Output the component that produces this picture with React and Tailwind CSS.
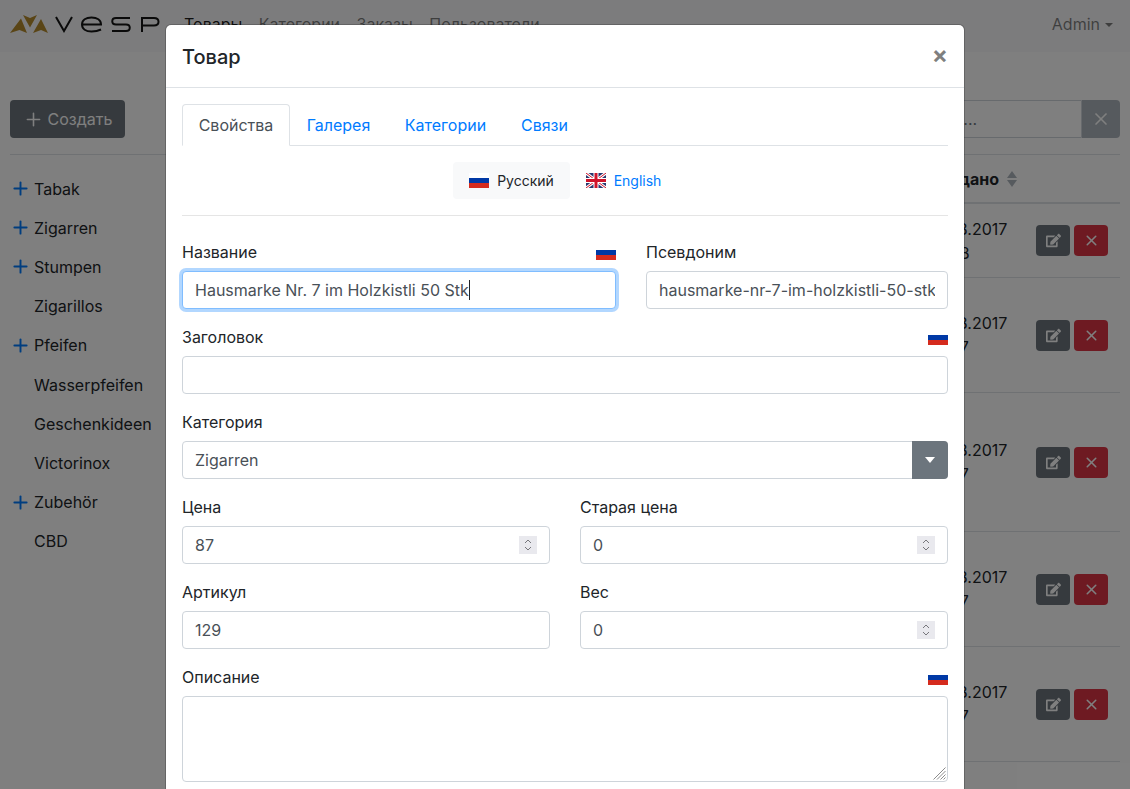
import React from "react";
import { Plus, X } from "lucide-react";
import { FaEdit } from "react-icons/fa";

const FONT = { fontFamily: "Inter, 'Noto Sans', sans-serif" };

function RuFlag({ className = "" }) {
  return (
    <svg viewBox="0 0 20 15" className={className} preserveAspectRatio="none">
      <rect width="20" height="5" fill="#ffffff" />
      <rect y="5" width="20" height="5" fill="#0039a6" />
      <rect y="10" width="20" height="5" fill="#d52b1e" />
    </svg>
  );
}

function UkFlag({ className = "" }) {
  return (
    <svg viewBox="0 0 60 45" className={className} preserveAspectRatio="none">
      <rect width="60" height="45" fill="#29376f" />
      <path d="M0 0 60 45M60 0 0 45" stroke="#fff" strokeWidth="9" />
      <path d="M0 0 60 45M60 0 0 45" stroke="#cf142b" strokeWidth="3" />
      <path d="M30 0V45M0 22.5H60" stroke="#fff" strokeWidth="15" />
      <path d="M30 0V45M0 22.5H60" stroke="#cf142b" strokeWidth="9" />
    </svg>
  );
}

function Logo() {
  return (
    <div className="flex items-center">
      <svg width="38" height="20" viewBox="0 0 38 20" className="block">
        <path d="M0 19 11 4.5 17 19 9.5 16Z" fill="#b58a2c" />
        <path d="M13 1 20 4 27 1 20 13.5Z" fill="#b58a2c" />
        <path d="M23 19 31 5 38 19 31 16Z" fill="#b58a2c" />
      </svg>
      <svg width="105" height="20" viewBox="0 0 105 20" className="block ml-[7px]">
        <g fill="none" stroke="#141414" strokeWidth="2">
          <path d="M1 3 9 17 17 3" />
          <path d="M27 10.5H46C46 6 42 3.5 36.5 3.5S27 6 27 10.5 31 17.5 36.5 17.5C40 17.5 43 17 46 15.5" />
          <path d="M75 4H61C56 4 56 10.5 61 10.5H71C76 10.5 76 17 71 17H57" />
          <path d="M87 18V4H99C105 4 105 11.5 99 11.5H87" />
        </g>
      </svg>
    </div>
  );
}

const categories = [
  ["Tabak", true],
  ["Zigarren", true],
  ["Stumpen", true],
  ["Zigarillos", false],
  ["Pfeifen", true],
  ["Wasserpfeifen", false],
  ["Geschenkideen", false],
  ["Victorinox", false],
  ["Zubehör", true],
  ["CBD", false],
];

const rows = [
  { h: 74, t: "12:38" },
  { h: 115, t: "12:37" },
  { h: 139, t: "12:37" },
  { h: 115, t: "12:37" },
  { h: 115, t: "12:37" },
];

const tabs = [
  ["Галерея", "w-[97px]"],
  ["Категории", "w-[117px]"],
  ["Связи", "w-[81px]"],
];

function Background() {
  return (
    <div className="h-[789px] overflow-hidden bg-white">
      <header className="h-[52px] bg-[#f8f9fa] flex items-center pl-[10px] pr-[17px] pb-[5px]">
        <Logo />
        <nav className="flex ml-[24px] gap-[16.5px] text-[#000000e6]">
          <span>Товары</span>
          <span className="text-black/50">Категории</span>
          <span className="text-black/50">Заказы</span>
          <span className="text-black/50">Пользователи</span>
        </nav>
        <div className="ml-auto flex items-center text-black/50">
          Admin
          <span className="ml-[5px] mt-[2px] border-x-[4px] border-t-[4px] border-x-transparent border-t-black/50" />
        </div>
      </header>
      <div className="flex px-[10px] pt-[48px]">
        <aside className="w-[156px] shrink-0">
          <button className="h-[38px] w-[115px] rounded bg-[#6c757d] text-white flex items-center justify-center gap-[4px]">
            <Plus size={21} strokeWidth={1.8} />
            Создать
          </button>
        </aside>
        <div className="flex-1 flex justify-end">
          <div className="flex h-[38px] w-[223px]">
            <input
              className="flex-1 min-w-0 px-[12px] border border-[#ced4da] rounded-l bg-white outline-none placeholder:text-[#6c757d]"
              placeholder="Поиск...."
              readOnly
            />
            <div className="w-[38px] shrink-0 bg-[#adb5bd] rounded-r flex items-center justify-center text-white">
              <X size={20} strokeWidth={2} />
            </div>
          </div>
        </div>
      </div>
      <div className="flex px-[10px] mt-[16px]">
        <aside className="w-[156px] shrink-0 border-t border-[#dee2e6] pt-[14px]">
          {categories.map(([name, plus]) => (
            <div key={name} className="h-[39.2px] flex items-center text-[#212529]">
              <span className="w-[24px] shrink-0 text-[#007bff]">
                {plus && <Plus size={21} strokeWidth={2.2} />}
              </span>
              <span className="whitespace-nowrap">{name}</span>
            </div>
          ))}
        </aside>
        <div className="flex-1 border-t border-[#dee2e6]">
          <div className="h-[49px] flex items-center justify-end border-b-2 border-[#dee2e6] pr-[102px] font-bold text-[#212529]">
            дано
            <svg width="12" height="16" viewBox="0 0 12 16" className="ml-[7px]">
              <path d="M6 0 11 7H1Z" fill="#adb5bd" />
              <path d="M6 16 11 9H1Z" fill="#adb5bd" />
            </svg>
          </div>
          {rows.map((r, i) => (
            <div
              key={i}
              className="flex justify-end items-center border-b border-[#dee2e6] pr-[12px]"
              style={{ height: r.h }}
            >
              <div className="text-[#212529] leading-[24px] w-[86px] mr-[26px] whitespace-nowrap">
                <div>20.08.2017</div>
                <div className="pl-[5px]">{r.t}</div>
              </div>
              <div className="flex gap-[4px]">
                <div className="w-[34px] h-[31px] rounded bg-[#6c757d] flex items-center justify-center text-white">
                  <FaEdit size={15} />
                </div>
                <div className="w-[34px] h-[31px] rounded bg-[#dc3545] flex items-center justify-center text-white">
                  <X size={17} strokeWidth={2.2} />
                </div>
              </div>
            </div>
          ))}
        </div>
      </div>
    </div>
  );
}

const inputCls =
  "block w-full h-[38px] px-[12px] bg-white border border-[#ced4da] rounded text-[#495057] outline-none";

function Label({ children, flag }) {
  return (
    <div className="flex items-center justify-between h-[24px] mb-[7px] text-[#212529]">
      <span>{children}</span>
      {flag && <RuFlag className="w-[20px] h-[15px]" />}
    </div>
  );
}

function Spinner() {
  return (
    <div className="absolute right-[13px] top-[10px] w-[18px] h-[18px] bg-[#e9e9ee] flex items-center justify-center">
      <svg width="10" height="14" viewBox="0 0 10 14" fill="none" stroke="#77777c" strokeWidth="1">
        <path d="M2 5 5 2 8 5" />
        <path d="M2 9 5 12 8 9" />
      </svg>
    </div>
  );
}

function NumberField({ label, value, spin = true }) {
  return (
    <div className="flex-1 min-w-0">
      <Label>{label}</Label>
      <div className="relative">
        <input className={inputCls} defaultValue={value} readOnly />
        {spin && <Spinner />}
      </div>
    </div>
  );
}

function Modal() {
  return (
    <div className="absolute left-[165px] top-[24px] w-[800px] h-[900px] bg-white border border-black/20 rounded-[6px] bg-clip-padding">
      <div className="h-[63px] border-b border-[#dee2e6] flex items-center justify-between px-[16px]">
        <h5 className="text-[20px] font-medium text-[#212529] mt-px">Товар</h5>
        <span className="text-[24px] leading-none font-bold text-black/50 -mt-[3px]">×</span>
      </div>
      <div className="px-[16px] pt-[16px]">
        <div className="flex h-[42px] border-b border-[#dee2e6]">
          <div className="h-[42px] w-[108px] flex items-center justify-center border border-[#dee2e6] border-b-white rounded-t text-[#495057] bg-white">
            Свойства
          </div>
          {tabs.map(([t, w]) => (
            <div key={t} className={`h-[41px] flex items-center justify-center text-[#007bff] ${w}`}>
              {t}
            </div>
          ))}
        </div>
        <div className="flex justify-center pt-[16px] pb-[16px] border-b border-[#e5e5e5] text-[14px]">
          <div className="h-[37px] w-[117px] rounded bg-[#f8f9fa] flex items-center justify-center gap-[8px] text-[#212529]">
            <RuFlag className="w-[20px] h-[15px]" />
            Русский
          </div>
          <div className="h-[37px] w-[107px] flex items-center justify-center gap-[8px] text-[#007bff]">
            <UkFlag className="w-[20px] h-[15px]" />
            English
          </div>
        </div>
        <div className="pt-[24px]">
          <div className="flex gap-[30px] mb-[16px]">
            <div className="w-[434px] shrink-0">
              <Label flag>Название</Label>
              <div className="relative">
                <input
                  className={`${inputCls} !border-[#80bdff] shadow-[0_0_0_3px_rgba(0,123,255,0.3)]`}
                  defaultValue="Hausmarke Nr. 7 im Holzkistli 50 Stk"
                  readOnly
                />
                <span className="absolute left-[287px] top-[9px] w-px h-[20px] bg-[#212529]" />
              </div>
            </div>
            <div className="flex-1 min-w-0">
              <Label>Псевдоним</Label>
              <input className={inputCls} defaultValue="hausmarke-nr-7-im-holzkistli-50-stk" readOnly />
            </div>
          </div>
          <div className="mb-[16px]">
            <Label flag>Заголовок</Label>
            <input className={inputCls} defaultValue="" readOnly />
          </div>
          <div className="mb-[16px]">
            <Label>Категория</Label>
            <div className={`${inputCls} flex items-center justify-between pr-0 relative`}>
              Zigarren
              <div className="absolute right-[-1px] top-[-1px] w-[36px] h-[38px] bg-[#6c757d] rounded-r flex items-center justify-center">
                <span className="border-x-[5px] border-t-[6px] border-x-transparent border-t-white" />
              </div>
            </div>
          </div>
          <div className="flex gap-[30px] mb-[16px]">
            <NumberField label="Цена" value="87" />
            <NumberField label="Старая цена" value="0" />
          </div>
          <div className="flex gap-[30px] mb-[16px]">
            <NumberField label="Артикул" value="129" spin={false} />
            <NumberField label="Вес" value="0" />
          </div>
          <div>
            <Label flag>Описание</Label>
            <div className="relative">
              <textarea
                className="block w-full h-[86px] px-[12px] py-[6px] bg-white border border-[#ced4da] rounded outline-none resize-none"
                readOnly
              />
              <svg width="13" height="13" viewBox="0 0 13 13" className="absolute right-[2px] bottom-[2px]" stroke="#6f6f6f" strokeWidth="0.8">
                <path d="M0.5 12.5 12.5 0.5M4 12.5 12.5 4M7.5 12.5 12.5 7.5M10.5 12.5 12.5 10.5" />
              </svg>
            </div>
          </div>
        </div>
      </div>
    </div>
  );
}

export default function App() {
  return (
    <div className="relative h-[789px] overflow-hidden" style={FONT}>
      <Background />
      <div className="absolute inset-0 bg-black/50" />
      <Modal />
    </div>
  );
}
